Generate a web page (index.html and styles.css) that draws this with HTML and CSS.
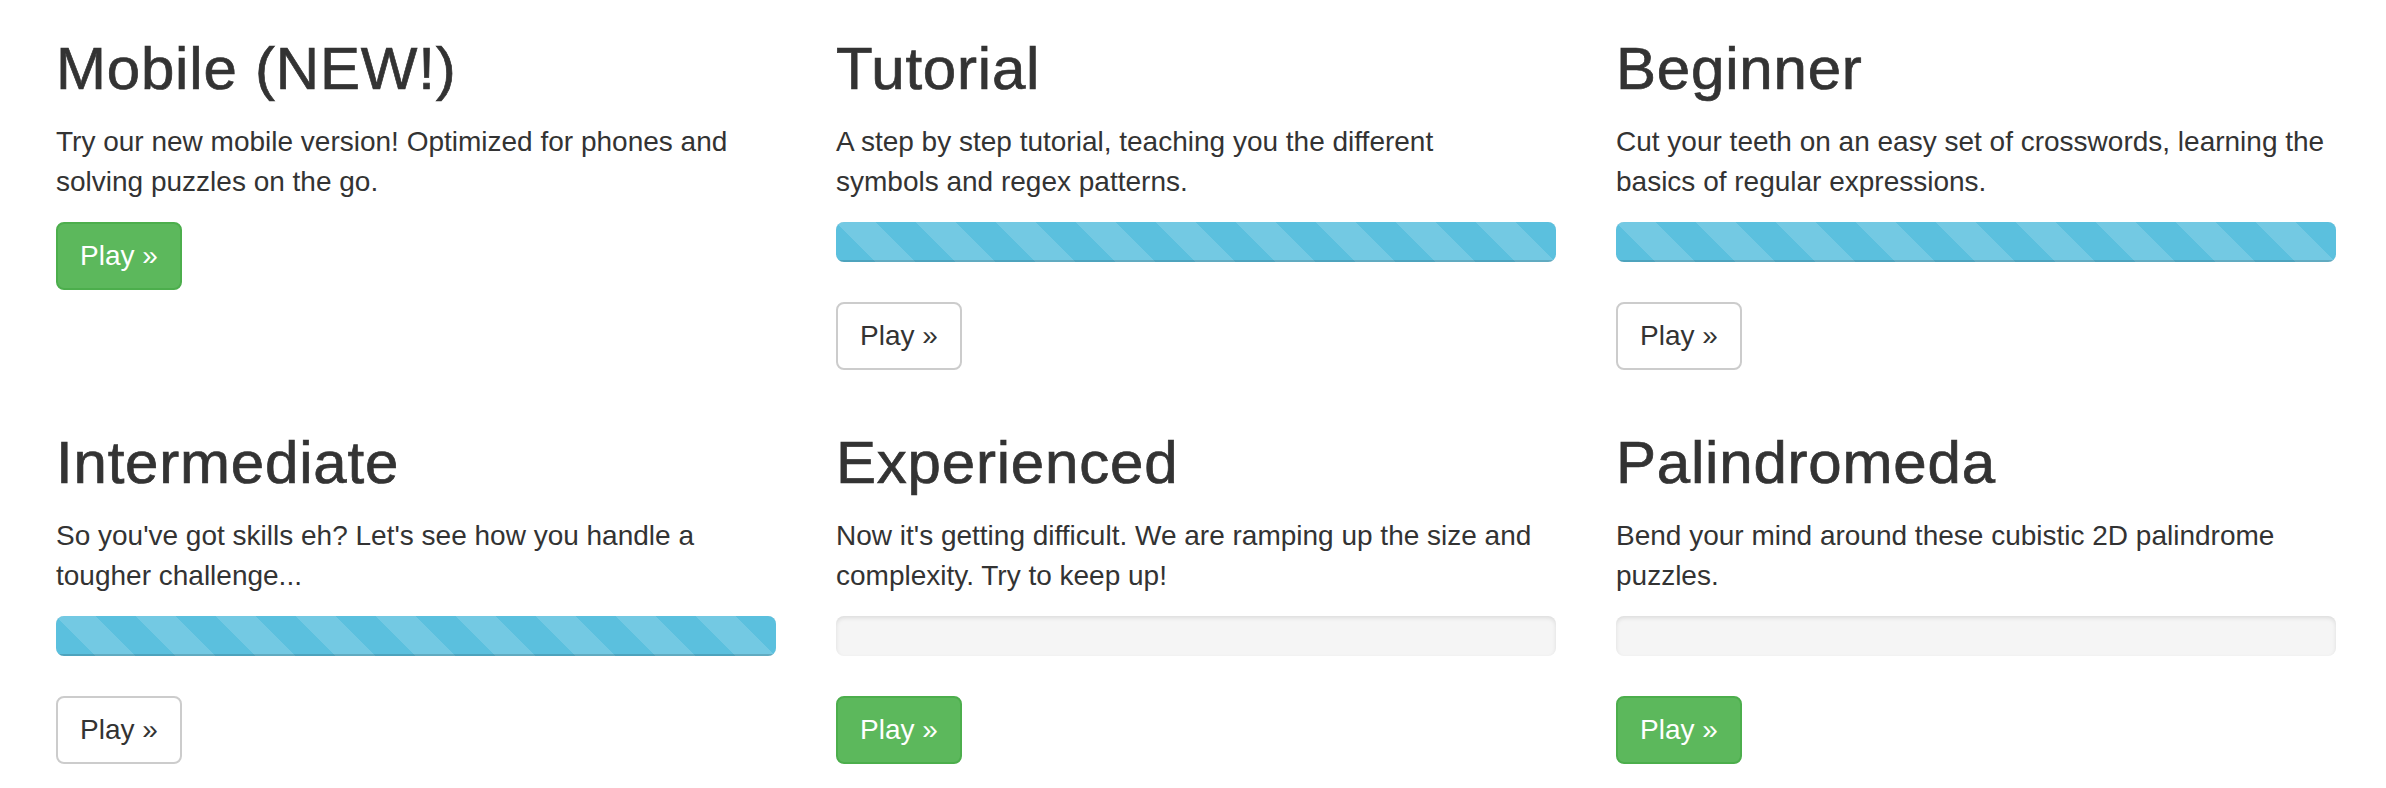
FILE: index.html
```html
<!DOCTYPE html>
<html lang="en">
<head>
<meta charset="utf-8">
<title>Regex Crossword</title>
<link rel="stylesheet" href="styles.css">
</head>
<body>
<div class="grid">
  <div class="card">
    <h2>Mobile (NEW!)</h2>
    <p>Try our new mobile version! Optimized for phones and solving puzzles on the go.</p>
    <div class="actions"><a class="btn btn-success" href="#">Play &raquo;</a></div>
  </div>
  <div class="card">
    <h2>Tutorial</h2>
    <p>A step by step tutorial, teaching you the different symbols&nbsp;and regex patterns.</p>
    <div class="progress"><div class="bar striped" style="width:100%"></div></div>
    <div class="actions"><a class="btn btn-default" href="#">Play &raquo;</a></div>
  </div>
  <div class="card">
    <h2>Beginner</h2>
    <p>Cut your teeth on an easy set of crosswords, learning the basics of regular expressions.</p>
    <div class="progress"><div class="bar striped" style="width:100%"></div></div>
    <div class="actions"><a class="btn btn-default" href="#">Play &raquo;</a></div>
  </div>
  <div class="card">
    <h2>Intermediate</h2>
    <p>So you've got skills eh? Let's see how you handle a tougher challenge...</p>
    <div class="progress"><div class="bar striped" style="width:100%"></div></div>
    <div class="actions"><a class="btn btn-default" href="#">Play &raquo;</a></div>
  </div>
  <div class="card">
    <h2>Experienced</h2>
    <p>Now it's getting difficult. We are ramping up the size and complexity. Try to keep up!</p>
    <div class="progress"></div>
    <div class="actions"><a class="btn btn-success" href="#">Play &raquo;</a></div>
  </div>
  <div class="card">
    <h2>Palindromeda</h2>
    <p>Bend your mind around these cubistic 2D palindrome puzzles.</p>
    <div class="progress"></div>
    <div class="actions"><a class="btn btn-success" href="#">Play &raquo;</a></div>
  </div>
</div>
</body>
</html>
```
FILE: styles.css
```css
html, body {
  margin: 0;
  padding: 0;
  background: #fff;
}
body {
  font-family: "Liberation Sans", Arial, Helvetica, sans-serif;
  font-size: 28px;
  line-height: 40px;
  color: #333;
  overflow: hidden;
}
.grid {
  display: grid;
  grid-template-columns: repeat(3, 1fr);
  column-gap: 60px;
  row-gap: 60px;
  padding: 36px 50px 0 56px;
}
.card {
  display: flex;
  flex-direction: column;
  align-items: stretch;
}
.card h2 {
  margin: 0 0 20px;
  font-size: 60px;
  line-height: 66px;
  font-weight: 500;
  letter-spacing: 0.8px;
  color: #333;
  -webkit-text-stroke: 0.7px #333;
}
.card p {
  margin: 0 0 20px;
}
.progress {
  height: 40px;
  margin: 0 0 40px;
  background-color: #f5f5f5;
  border-radius: 8px;
  box-shadow: inset 0 2px 4px rgba(0, 0, 0, 0.1);
  overflow: hidden;
}
.bar {
  height: 100%;
  background-color: #5bc0de;
  box-shadow: inset 0 -2px 0 rgba(0, 0, 0, 0.15);
}
.bar.striped {
  background-image: linear-gradient(45deg,
    rgba(255, 255, 255, 0.15) 25%, transparent 25%,
    transparent 50%, rgba(255, 255, 255, 0.15) 50%,
    rgba(255, 255, 255, 0.15) 75%, transparent 75%, transparent);
  background-size: 80px 80px;
}
.actions {
  display: flex;
  margin: 0;
}
.btn {
  display: inline-block;
  padding: 12px 22px;
  font-size: 28px;
  line-height: 40px;
  border: 2px solid transparent;
  border-radius: 8px;
  text-decoration: none;
  white-space: nowrap;
}
.btn-success {
  color: #fff;
  background-color: #5cb85c;
  border-color: #4cae4c;
}
.btn-default {
  color: #333;
  background-color: #fff;
  border-color: #ccc;
}
```
